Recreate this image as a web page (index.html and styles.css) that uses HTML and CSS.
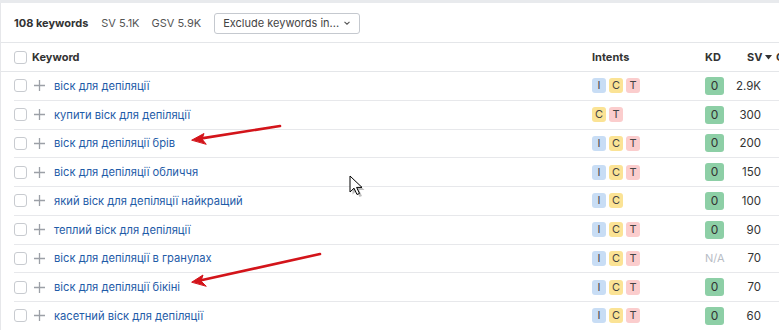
FILE: index.html
```html
<!DOCTYPE html>
<html lang="uk">
<head>
  <meta charset="UTF-8" />
  <title>Keywords</title>
  <link rel="stylesheet" href="styles.css">
</head>
<body>

<div class="topstrip"></div>

<div class="panel">
  <div class="toolbar">
    <span class="total">108 keywords</span>
    <span class="stat">SV 5.1K</span>
    <span class="stat">GSV 5.9K</span>
    <button class="dropdown">Exclude keywords in... <svg width="8" height="6" viewBox="0 0 8 6"><path d="M1.5 1.8 L4 4.2 L6.5 1.8" fill="none" stroke="#555" stroke-width="1.1"/></svg></button>
  </div>

  <div class="head">
    <div class="grid">
      <span class="check"></span>
      <span class="h-keyword">Keyword</span>
      <span class="h-intents">Intents</span>
      <span class="h-kd">KD</span>
      <span class="h-sv">SV <svg class="sort" width="7" height="5" viewBox="0 0 7 5"><path d="M0 0 H7 L3.5 4.5 Z" fill="#333"/></svg></span>
      <span class="h-g">GSV</span>
    </div>
  </div>

  <div class="rows">
    <div class="row grid">
      <span class="check"></span><span class="plus"><svg width="11" height="11" viewBox="0 0 11 11"><path d="M5.5 0 V11 M0 5.5 H11" stroke="#9ca0a7" stroke-width="1.3"/></svg></span>
      <a class="kw">віск для депіляції</a>
      <span class="intents"><i class="in-i">I</i><i class="in-c">C</i><i class="in-t">T</i></span>
      <span class="kd"><b>0</b></span><span class="sv">2.9K</span>
    </div>
    <div class="row grid">
      <span class="check"></span><span class="plus"><svg width="11" height="11" viewBox="0 0 11 11"><path d="M5.5 0 V11 M0 5.5 H11" stroke="#9ca0a7" stroke-width="1.3"/></svg></span>
      <a class="kw">купити віск для депіляції</a>
      <span class="intents"><i class="in-c">C</i><i class="in-t">T</i></span>
      <span class="kd"><b>0</b></span><span class="sv">300</span>
    </div>
    <div class="row grid">
      <span class="check"></span><span class="plus"><svg width="11" height="11" viewBox="0 0 11 11"><path d="M5.5 0 V11 M0 5.5 H11" stroke="#9ca0a7" stroke-width="1.3"/></svg></span>
      <a class="kw">віск для депіляції брів</a>
      <span class="intents"><i class="in-i">I</i><i class="in-c">C</i><i class="in-t">T</i></span>
      <span class="kd"><b>0</b></span><span class="sv">200</span>
    </div>
    <div class="row grid">
      <span class="check"></span><span class="plus"><svg width="11" height="11" viewBox="0 0 11 11"><path d="M5.5 0 V11 M0 5.5 H11" stroke="#9ca0a7" stroke-width="1.3"/></svg></span>
      <a class="kw">віск для депіляції обличчя</a>
      <span class="intents"><i class="in-i">I</i><i class="in-c">C</i><i class="in-t">T</i></span>
      <span class="kd"><b>0</b></span><span class="sv">150</span>
    </div>
    <div class="row grid">
      <span class="check"></span><span class="plus"><svg width="11" height="11" viewBox="0 0 11 11"><path d="M5.5 0 V11 M0 5.5 H11" stroke="#9ca0a7" stroke-width="1.3"/></svg></span>
      <a class="kw">який віск для депіляції найкращий</a>
      <span class="intents"><i class="in-i">I</i><i class="in-c">C</i></span>
      <span class="kd"><b>0</b></span><span class="sv">100</span>
    </div>
    <div class="row grid">
      <span class="check"></span><span class="plus"><svg width="11" height="11" viewBox="0 0 11 11"><path d="M5.5 0 V11 M0 5.5 H11" stroke="#9ca0a7" stroke-width="1.3"/></svg></span>
      <a class="kw">теплий віск для депіляції</a>
      <span class="intents"><i class="in-i">I</i><i class="in-c">C</i><i class="in-t">T</i></span>
      <span class="kd"><b>0</b></span><span class="sv">90</span>
    </div>
    <div class="row grid">
      <span class="check"></span><span class="plus"><svg width="11" height="11" viewBox="0 0 11 11"><path d="M5.5 0 V11 M0 5.5 H11" stroke="#9ca0a7" stroke-width="1.3"/></svg></span>
      <a class="kw">віск для депіляції в гранулах</a>
      <span class="intents"><i class="in-i">I</i><i class="in-c">C</i><i class="in-t">T</i></span>
      <span class="kd"><span class="na">N/A</span></span><span class="sv">70</span>
    </div>
    <div class="row grid">
      <span class="check"></span><span class="plus"><svg width="11" height="11" viewBox="0 0 11 11"><path d="M5.5 0 V11 M0 5.5 H11" stroke="#9ca0a7" stroke-width="1.3"/></svg></span>
      <a class="kw">віск для депіляції бікіні</a>
      <span class="intents"><i class="in-i">I</i><i class="in-c">C</i><i class="in-t">T</i></span>
      <span class="kd"><b>0</b></span><span class="sv">70</span>
    </div>
    <div class="row grid">
      <span class="check"></span><span class="plus"><svg width="11" height="11" viewBox="0 0 11 11"><path d="M5.5 0 V11 M0 5.5 H11" stroke="#9ca0a7" stroke-width="1.3"/></svg></span>
      <a class="kw">касетний віск для депіляції</a>
      <span class="intents"><i class="in-i">I</i><i class="in-c">C</i><i class="in-t">T</i></span>
      <span class="kd"><b>0</b></span><span class="sv">60</span>
    </div>
  </div>
</div>

<!-- annotations drawn over the screenshot -->
<svg class="overlay" width="779" height="330" viewBox="0 0 779 330">
  <g stroke="#d3141a" stroke-width="2.6" stroke-linecap="round" fill="#d3141a">
    <line x1="280" y1="126" x2="200" y2="138.6"/>
    <path d="M192 140 L204 133.5 L202 139 L206 144 Z" stroke-width="1"/>
    <line x1="320" y1="254" x2="200" y2="280.5"/>
    <path d="M192 282 L203 275 L201 281 L206 286 Z" stroke-width="1"/>
  </g>
  <g transform="translate(350 176)">
    <path d="M1 1 L1 17 L5 13.2 L8 19.5 L10.5 18.4 L7.6 12.4 L13 12.4 Z" fill="#000" opacity="0.25" transform="translate(1.5 1.5)"/>
    <path d="M0 0 L0 16 L4 12.2 L7 18.5 L9.5 17.4 L6.6 11.4 L12 11.4 Z" fill="#fff" stroke="#000" stroke-width="1" stroke-linejoin="round"/>
  </g>
</svg>

</body>
</html>
```

FILE: styles.css
```css
body {
  margin: 0;
  background: #fff;
  font-family: Inter, "Noto Sans", sans-serif;
  font-size: 11px;
  color: #333;
  width: 779px;
  height: 330px;
  overflow: hidden;
  position: relative;
}

.topstrip {
  height: 3px;
  background: #e8eaed;
}

.panel {
  border-left: 1px solid #e6e7ea;
}

.toolbar {
  height: 40px;
  display: flex;
  align-items: center;
  padding-left: 13px;
  padding-top: 1px;
  border-bottom: 1px solid #e4e6e9;
  box-sizing: border-box;
}

.total {
  font-weight: 700;
  color: #333;
  margin-right: 13px;
}

.stat {
  color: #555;
  margin-right: 12px;
}

.dropdown {
  font-family: Inter, "Noto Sans", sans-serif;
  font-size: 11px;
  color: #444;
  background: #fff;
  border: 1px solid #c5c9cf;
  border-radius: 3px;
  height: 21px;
  padding: 0 8px;
  display: flex;
  align-items: center;
  gap: 4px;
  margin-left: 1px;
}

.grid {
  display: grid;
  grid-template-columns: 20px 20px 538px 113px 24px 32px 40px;
  align-items: center;
}

.head {
  height: 28px;
  padding-left: 13px;
  border-bottom: 1px solid #e4e6e9;
}

.head .grid {
  height: 28px;
  font-weight: 700;
  color: #333;
}

.h-keyword {
  grid-column: 2 / 4;
  margin-left: -2px;
}

.h-sv {
  padding-left: 18px;
  white-space: nowrap;
  display: flex;
  align-items: center;
  gap: 3px;
  overflow: visible;
}

.sort {
  flex-shrink: 0;
  display: block;
}

.h-g {
  padding-left: 15px;
  white-space: nowrap;
}

.rows {
  margin-left: 13px;
}

.row {
  height: 28.75px;
  box-sizing: border-box;
  border-bottom: 1px solid #e7e8eb;
}

.check {
  width: 11px;
  height: 11px;
  border: 1px solid #c8cbd0;
  border-radius: 3px;
  background: #fff;
}

.plus {
  display: flex;
  align-items: center;
}

.kw {
  color: #1f5ca8;
  white-space: nowrap;
  font-size: 11.2px;
}

.intents {
  display: flex;
  gap: 3px;
}

.intents i {
  font-style: normal;
  font-size: 11px;
  width: 14px;
  height: 15px;
  line-height: 15px;
  text-align: center;
  border-radius: 3px;
  color: #444;
}

.in-i { background: #c8ddf5; }
.in-c { background: #fbe395; }
.in-t { background: #fbcdcd; }

.kd b {
  display: block;
  width: 19px;
  height: 18px;
  line-height: 18px;
  text-align: center;
  font-weight: 400;
  font-size: 12px;
  background: #8dcfa6;
  border-radius: 3px;
  color: #333;
}

.na {
  color: #b7bcc5;
}

.sv {
  text-align: right;
  color: #333;
  font-size: 11.5px;
}

.overlay {
  position: absolute;
  left: 0;
  top: 0;
  pointer-events: none;
}
```
